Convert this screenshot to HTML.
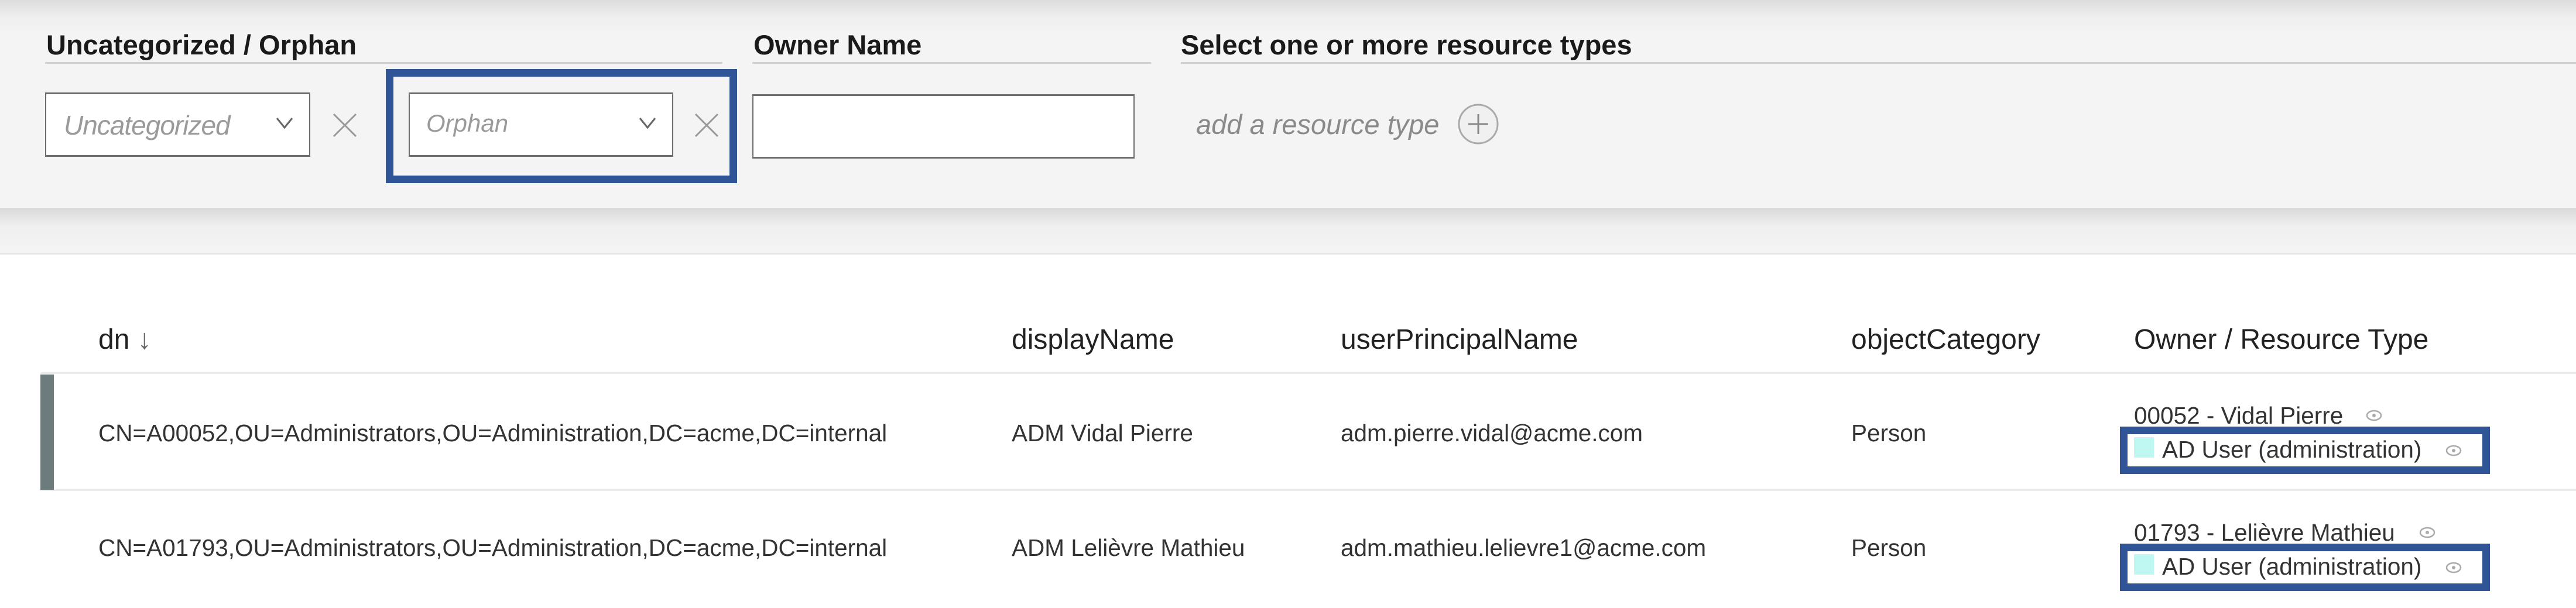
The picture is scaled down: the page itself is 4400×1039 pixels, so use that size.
<!DOCTYPE html>
<html><head><meta charset="utf-8"><style>
*{margin:0;padding:0;box-sizing:border-box}
body{width:4400px;height:1039px;background:#fff;font-family:"Liberation Sans",sans-serif;position:relative;overflow:hidden;color:#222}
.a{position:absolute}
.panel{left:0;top:0;width:4400px;height:355px;background:linear-gradient(#dcdcdc 0,#efefef 30px,#f4f4f4 60px)}
.shadow{left:0;top:355px;width:4400px;height:80px;background:linear-gradient(#d8d8d8,#efefef 30px,#f4f4f4);border-bottom:3px solid #e6e6e6}
.lbl{font-weight:bold;font-size:47px;top:49px;color:#1a1a1a;white-space:nowrap}
.ul{height:3px;background:#cfcfcf;top:106px}
.dd{top:158px;height:110px;background:#fff;border:3px solid #6d6d6d;border-left-width:2px;border-right-width:2px}
.ph{font-style:italic;color:#9a9a9a;font-size:44px;top:187px;white-space:nowrap}
.hd{font-size:48px;top:553px;color:#222;white-space:nowrap}
.td{font-size:40.5px;color:#333;white-space:nowrap}
.blue{border:13px solid #2f5597;background:#fff}
</style></head><body>
<div class="a panel"></div>
<div class="a shadow"></div>

<div class="a lbl" style="left:79px">Uncategorized / Orphan</div>
<div class="a ul" style="left:77px;width:1157px"></div>
<div class="a lbl" style="left:1287px">Owner Name</div>
<div class="a ul" style="left:1285px;width:681px"></div>
<div class="a lbl" style="left:2017px">Select one or more resource types</div>
<div class="a ul" style="left:2017px;width:2383px"></div>

<div class="a dd" style="left:77px;width:453px"></div>
<div class="a ph" style="left:109px;font-size:46px;letter-spacing:-1px">Uncategorized</div>
<svg class="a" style="left:470px;top:196px" width="32" height="30"><path d="M3 6 L16 22 L29 6" fill="none" stroke="#666" stroke-width="3"/></svg>
<svg class="a" style="left:566px;top:192px" width="46" height="44"><path d="M4 3 L42 41 M42 3 L4 41" fill="none" stroke="#999" stroke-width="3"/></svg>

<div class="a" style="left:659px;top:118px;width:600px;height:195px;border:13px solid #2f5597"></div>
<div class="a dd" style="left:698px;width:452px"></div>
<div class="a ph" style="left:728px;font-size:42px">Orphan</div>
<svg class="a" style="left:1090px;top:196px" width="32" height="30"><path d="M3 6 L16 22 L29 6" fill="none" stroke="#666" stroke-width="3"/></svg>
<svg class="a" style="left:1184px;top:192px" width="46" height="44"><path d="M4 3 L42 41 M42 3 L4 41" fill="none" stroke="#999" stroke-width="3"/></svg>

<div class="a dd" style="left:1285px;top:161px;width:653px"></div>

<div class="a ph" style="left:2043px;top:185px;font-size:47px;color:#8a8a8a">add a resource type</div>
<svg class="a" style="left:2488px;top:175px" width="74" height="74"><circle cx="37" cy="37" r="33" fill="#f0f0f0" stroke="#aaa" stroke-width="3"/><path d="M37 20 V54 M20 37 H54" stroke="#888" stroke-width="3"/></svg>

<div class="a hd" style="left:168px">dn <span style="color:#666">&#8595;</span></div>
<div class="a hd" style="left:1728px">displayName</div>
<div class="a hd" style="left:2290px">userPrincipalName</div>
<div class="a hd" style="left:3162px">objectCategory</div>
<div class="a hd" style="left:3645px">Owner / Resource Type</div>

<div class="a" style="left:69px;top:636px;width:4331px;height:3px;background:#ececec"></div>
<div class="a" style="left:69px;top:836px;width:4331px;height:3px;background:#ececec"></div>
<div class="a" style="left:69px;top:640px;width:23px;height:197px;background:#6c7b7b"></div>

<div class="a td" style="left:168px;top:717px">CN=A00052,OU=Administrators,OU=Administration,DC=acme,DC=internal</div>
<div class="a td" style="left:1728px;top:717px">ADM Vidal Pierre</div>
<div class="a td" style="left:2290px;top:717px">adm.pierre.vidal@acme.com</div>
<div class="a td" style="left:3162px;top:717px">Person</div>

<div class="a td" style="left:168px;top:913px">CN=A01793,OU=Administrators,OU=Administration,DC=acme,DC=internal</div>
<div class="a td" style="left:1728px;top:913px">ADM Lelièvre Mathieu</div>
<div class="a td" style="left:2290px;top:913px">adm.mathieu.lelievre1@acme.com</div>
<div class="a td" style="left:3162px;top:913px">Person</div>

<div class="a td" style="left:3645px;top:687px">00052 - Vidal Pierre</div>
<svg class="a" style="left:4040px;top:698px" width="30" height="24"><ellipse cx="15" cy="12" rx="12" ry="8" fill="none" stroke="#aaa" stroke-width="2.5"/><circle cx="15" cy="12" r="3" fill="#aaa"/></svg>
<div class="a blue" style="left:3621px;top:729px;width:632px;height:81px"></div>
<div class="a" style="left:3645px;top:747px;width:34px;height:35px;background:#bff7f2"></div>
<div class="a td" style="left:3693px;top:745px">AD User (administration)</div>
<svg class="a" style="left:4176px;top:758px" width="30" height="24"><ellipse cx="15" cy="12" rx="12" ry="8" fill="none" stroke="#aaa" stroke-width="2.5"/><circle cx="15" cy="12" r="3" fill="#aaa"/></svg>

<div class="a td" style="left:3645px;top:887px">01793 - Lelièvre Mathieu</div>
<svg class="a" style="left:4131px;top:898px" width="30" height="24"><ellipse cx="15" cy="12" rx="12" ry="8" fill="none" stroke="#aaa" stroke-width="2.5"/><circle cx="15" cy="12" r="3" fill="#aaa"/></svg>
<div class="a blue" style="left:3621px;top:929px;width:632px;height:81px"></div>
<div class="a" style="left:3645px;top:947px;width:34px;height:35px;background:#bff7f2"></div>
<div class="a td" style="left:3693px;top:945px">AD User (administration)</div>
<svg class="a" style="left:4176px;top:958px" width="30" height="24"><ellipse cx="15" cy="12" rx="12" ry="8" fill="none" stroke="#aaa" stroke-width="2.5"/><circle cx="15" cy="12" r="3" fill="#aaa"/></svg>
</body></html>
